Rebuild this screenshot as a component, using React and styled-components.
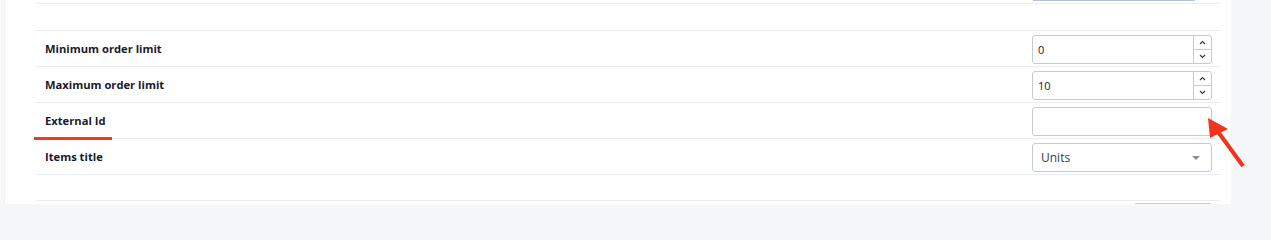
import React from "react";
import styled, { createGlobalStyle } from "styled-components";

const GlobalStyle = createGlobalStyle`
  html, body {
    margin: 0;
    padding: 0;
    background: #f6f7f9;
    font-family: "Open Sans", "Noto Sans", Arial, sans-serif;
  }
`;

const Page = styled.div`
  position: relative;
  height: 204px;
  overflow: hidden;
  padding-left: 4px;
`;

const Card = styled.div`
  width: 1227px;
  height: 204px;
  background: #fff;
  border-left: 1px solid #eef0f3;
  box-sizing: border-box;
  padding: 0 11px 0 31px;
`;

const TopStub = styled.div`
  height: 3px;
  display: flex;
  justify-content: flex-end;
  div {
    width: 162px;
    height: 1px;
    margin-right: 25px;
    border: 1px solid #b9c3d8;
    border-top: none;
    box-sizing: border-box;
  }
`;

const Spacer = styled.div`
  height: ${(p) => p.h}px;
  border-top: 1px solid #e8ebf0;
  box-sizing: border-box;
`;

const Row = styled.div`
  position: relative;
  height: 36px;
  border-top: 1px solid #e8ebf0;
  box-sizing: border-box;
  display: flex;
  align-items: center;
  justify-content: space-between;
  padding: 2px 8px 0 9px;
`;

const Label = styled.div`
  font-size: 11.2px;
  font-weight: 700;
  color: #1a1a28;
  margin-top: -3px;
`;

const Mark = styled.div`
  position: absolute;
  z-index: 2;
  left: -2px;
  bottom: -2px;
  width: 78px;
  height: 3px;
  background: #f2381f;
`;

const Field = styled.div`
  width: 180px;
  height: 29px;
  border: 1px solid #c4cbd6;
  border-radius: 3px;
  box-sizing: border-box;
  display: flex;
  align-items: center;
  background: #fff;
`;

const Value = styled.span`
  flex: 1;
  padding-left: ${(p) => (p.$select ? 8 : 5)}px;
  font-size: ${(p) => (p.$select ? 12 : 11)}px;
  color: ${(p) => (p.$select ? "#3a3a44" : "#1b1b22")};
`;

const Spin = styled.div`
  width: 17px;
  align-self: stretch;
  border-left: 1px solid #c4cbd6;
  display: flex;
  flex-direction: column;
`;

const SpinBtn = styled.div`
  flex: 1;
  display: flex;
  align-items: center;
  justify-content: center;
  & + & {
    border-top: 1px solid #c4cbd6;
  }
`;

const Caret = styled.div`
  width: 0;
  height: 0;
  margin-right: 11px;
  border-left: 4px solid transparent;
  border-right: 4px solid transparent;
  border-top: 4px solid #8a8d93;
`;

const BottomStub = styled.div`
  display: flex;
  justify-content: flex-end;
  border-top: 1px solid #e8ebf0;
  padding-top: 2px;
  div {
    width: 78px;
    height: 4px;
    margin-right: 8px;
    border: 1px solid #c5ccd4;
    border-bottom: none;
    border-radius: 3px 3px 0 0;
    box-sizing: border-box;
  }
`;

const Arrow = styled.svg`
  position: absolute;
  z-index: 3;
  left: 1200px;
  top: 110px;
`;

function Chevron({ up }) {
  return (
    <svg width="7" height="5" viewBox="0 0 7 5">
      <path
        d={up ? "M1 4 L3.5 1.5 L6 4" : "M1 1 L3.5 3.5 L6 1"}
        fill="none"
        stroke="#3a3d48"
        strokeWidth="1.2"
      />
    </svg>
  );
}

function NumberField({ value }) {
  return (
    <Field>
      <Value>{value}</Value>
      <Spin>
        <SpinBtn>
          <Chevron up />
        </SpinBtn>
        <SpinBtn>
          <Chevron />
        </SpinBtn>
      </Spin>
    </Field>
  );
}

export default function App() {
  return (
    <Page>
      <GlobalStyle />
      <Card>
        <TopStub>
          <div />
        </TopStub>
        <Spacer h={27} />
        <Row>
          <Label>Minimum order limit</Label>
          <NumberField value="0" />
        </Row>
        <Row>
          <Label>Maximum order limit</Label>
          <NumberField value="10" />
        </Row>
        <Row>
          <Label>External Id</Label>
          <Field />
          <Mark />
        </Row>
        <Row>
          <Label>Items title</Label>
          <Field>
            <Value $select>Units</Value>
            <Caret />
          </Field>
        </Row>
        <Spacer h={26} />
        <BottomStub>
          <div />
        </BottomStub>
      </Card>
      <Arrow width="50" height="60" viewBox="1200 110 50 60">
        <line
          x1="1216"
          y1="129"
          x2="1243"
          y2="166"
          stroke="#f2331d"
          strokeWidth="4"
        />
        <polygon points="1208,118 1210,138 1228,129" fill="#f2331d" />
      </Arrow>
    </Page>
  );
}
